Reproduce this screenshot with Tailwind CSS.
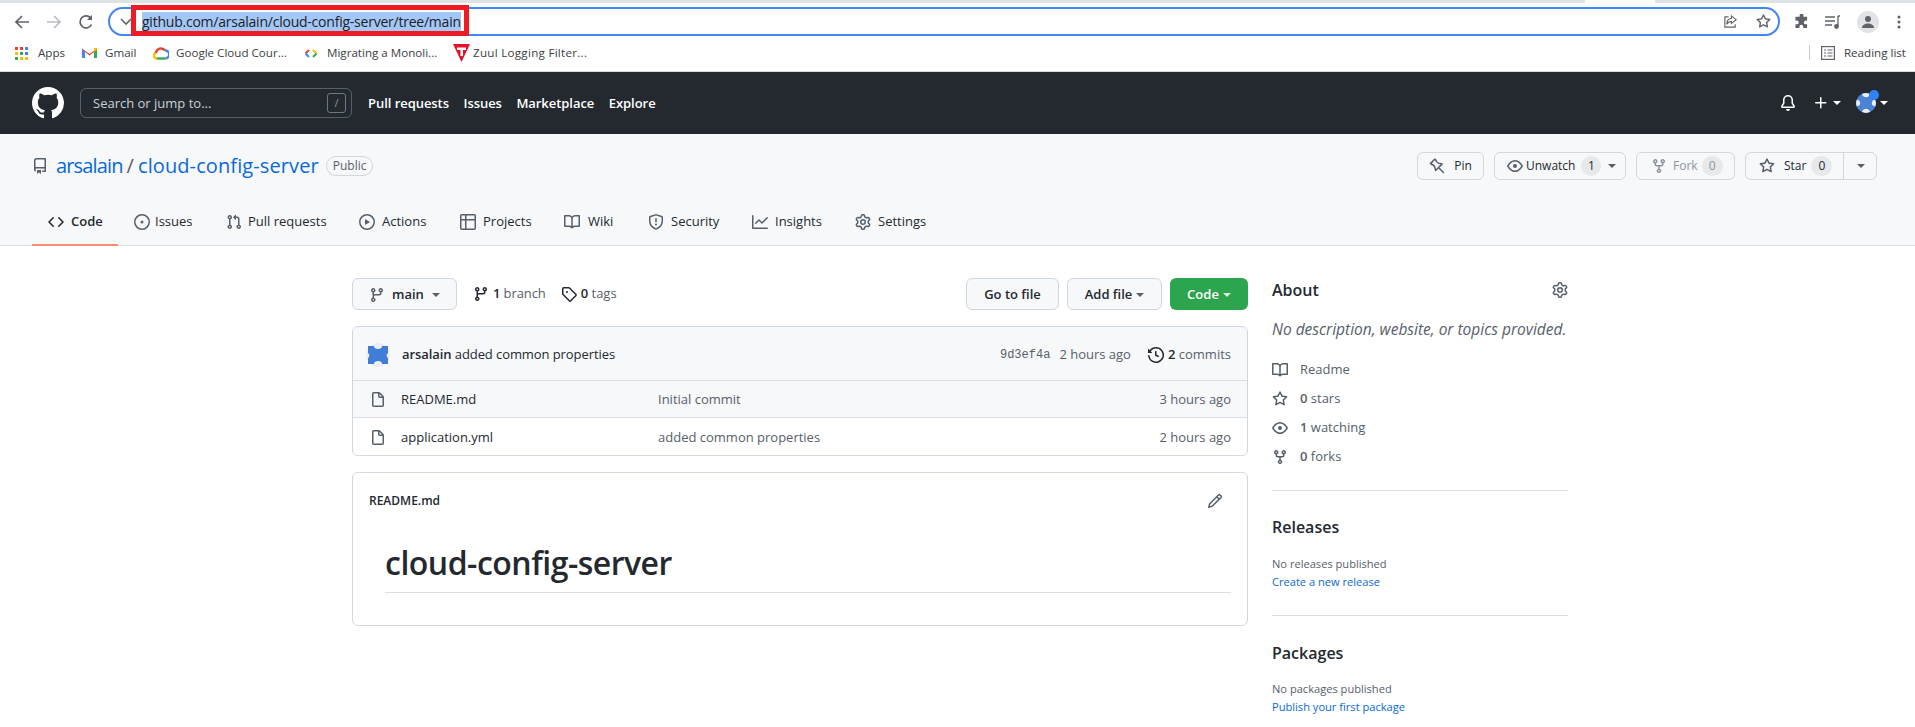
<!DOCTYPE html>
<html lang="en">
<head>
  <meta charset="UTF-8" />
  <title>arsalain/cloud-config-server</title>
  <script src="https://cdn.jsdelivr.net/npm/@tailwindcss/browser@4"></script>
</head>
<body class="h-[727px] overflow-hidden bg-white text-[#24292f] font-['Open_Sans',sans-serif] text-[13px]">
  <svg class="hidden">
    <symbol id="i-mark" viewBox="0 0 16 16"><path fill-rule="evenodd" d="M8 0C3.58 0 0 3.58 0 8c0 3.54 2.29 6.53 5.47 7.59.4.07.55-.17.55-.38 0-.19-.01-.82-.01-1.49-2.01.37-2.53-.49-2.69-.94-.09-.23-.48-.94-.82-1.13-.28-.15-.68-.52-.01-.53.63-.01 1.08.58 1.23.82.72 1.21 1.87.87 2.33.66.07-.52.28-.87.51-1.07-1.78-.2-3.64-.89-3.64-3.95 0-.87.31-1.59.82-2.15-.08-.2-.36-1.02.08-2.12 0 0 .67-.21 2.2.82.64-.18 1.32-.27 2-.27.68 0 1.36.09 2 .27 1.53-1.04 2.2-.82 2.2-.82.44 1.1.16 1.92.08 2.12.51.56.82 1.27.82 2.15 0 3.07-1.87 3.75-3.65 3.95.29.25.54.73.54 1.48 0 1.07-.01 1.93-.01 2.2 0 .21.15.46.55.38A8.013 8.013 0 0016 8c0-4.42-3.58-8-8-8z"/></symbol>
    <symbol id="i-repo" viewBox="0 0 16 16"><path fill-rule="evenodd" d="M2 2.5A2.5 2.5 0 014.5 0h8.75a.75.75 0 01.75.75v12.5a.75.75 0 01-.75.75h-2.5a.75.75 0 110-1.5h1.75v-2h-8a1 1 0 00-.714 1.7.75.75 0 01-1.072 1.05A2.495 2.495 0 012 11.5v-9zm10.5-1V9h-8c-.356 0-.694.074-1 .208V2.5a1 1 0 011-1h8zM5 12.25v3.25a.25.25 0 00.4.2l1.45-1.087a.25.25 0 01.3 0L8.6 15.7a.25.25 0 00.4-.2v-3.25a.25.25 0 00-.25-.25h-3.5a.25.25 0 00-.25.25z"/></symbol>
    <symbol id="i-code" viewBox="0 0 16 16"><path fill-rule="evenodd" d="M4.72 3.22a.75.75 0 011.06 1.06L2.06 8l3.72 3.72a.75.75 0 11-1.06 1.06L.47 8.53a.75.75 0 010-1.06l4.25-4.25zm6.56 0a.75.75 0 10-1.06 1.06L13.94 8l-3.72 3.72a.75.75 0 101.06 1.06l4.25-4.25a.75.75 0 000-1.06l-4.25-4.25z"/></symbol>
    <symbol id="i-issue" viewBox="0 0 16 16"><path d="M8 9.5a1.5 1.5 0 100-3 1.5 1.5 0 000 3z"/><path fill-rule="evenodd" d="M8 0a8 8 0 100 16A8 8 0 008 0zM1.5 8a6.5 6.5 0 1113 0 6.5 6.5 0 01-13 0z"/></symbol>
    <symbol id="i-pr" viewBox="0 0 16 16"><path fill-rule="evenodd" d="M7.177 3.073L9.573.677A.25.25 0 0110 .854v4.792a.25.25 0 01-.427.177L7.177 3.427a.25.25 0 010-.354zM3.75 2.5a.75.75 0 100 1.5.75.75 0 000-1.5zm-2.25.75a2.25 2.25 0 113 2.122v5.256a2.251 2.251 0 11-1.5 0V5.372A2.25 2.25 0 011.5 3.25zM11 2.5h-1V4h1a1 1 0 011 1v5.628a2.251 2.251 0 101.5 0V5A2.5 2.5 0 0011 2.5zm1 10.25a.75.75 0 111.5 0 .75.75 0 01-1.5 0zM3.75 12a.75.75 0 100 1.5.75.75 0 000-1.5z"/></symbol>
    <symbol id="i-play" viewBox="0 0 16 16"><path fill-rule="evenodd" d="M1.5 8a6.5 6.5 0 1113 0 6.5 6.5 0 01-13 0zM8 0a8 8 0 100 16A8 8 0 008 0zM6.379 5.227A.25.25 0 006 5.442v5.117a.25.25 0 00.379.214l4.264-2.559a.25.25 0 000-.428L6.379 5.227z"/></symbol>
    <symbol id="i-table" viewBox="0 0 16 16"><path fill-rule="evenodd" d="M0 1.75C0 .784.784 0 1.75 0h12.5C15.216 0 16 .784 16 1.75v12.5A1.75 1.75 0 0114.25 16H1.75A1.75 1.75 0 010 14.25V1.75zM1.5 6.5v7.75c0 .138.112.25.25.25H5v-8H1.5zM5 5H1.5V1.75a.25.25 0 01.25-.25H5V5zm1.5 1.5v8h7.75a.25.25 0 00.25-.25V6.5h-8zm8-1.5h-8V1.5h7.75a.25.25 0 01.25.25V5z"/></symbol>
    <symbol id="i-book" viewBox="0 0 16 16"><path fill-rule="evenodd" d="M0 1.75A.75.75 0 01.75 1h4.253c1.227 0 2.317.59 3 1.501A3.744 3.744 0 0111.006 1h4.245a.75.75 0 01.75.75v10.5a.75.75 0 01-.75.75h-4.507a2.25 2.25 0 00-1.591.659l-.622.621a.75.75 0 01-1.06 0l-.622-.621A2.25 2.25 0 005.258 13H.75a.75.75 0 01-.75-.75V1.75zm8.755 3a2.25 2.25 0 012.25-2.25H14.5v9h-3.757c-.71 0-1.4.201-1.992.572l.004-7.322zm-1.504 7.324l.004-5.073-.002-2.253A2.25 2.25 0 005.003 2.5H1.5v9h3.757a3.75 3.75 0 011.994.574z"/></symbol>
    <symbol id="i-shield" viewBox="0 0 16 16"><path fill-rule="evenodd" d="M7.467.133a1.75 1.75 0 011.066 0l5.25 1.68A1.75 1.75 0 0115 3.48V7c0 1.566-.32 3.182-1.303 4.682-.983 1.498-2.585 2.813-5.032 3.855a1.7 1.7 0 01-1.33 0c-2.447-1.042-4.049-2.357-5.032-3.855C1.32 10.182 1 8.566 1 7V3.48a1.75 1.75 0 011.217-1.667l5.25-1.68zm.61 1.429a.25.25 0 00-.153 0l-5.25 1.68a.25.25 0 00-.174.238V7c0 1.358.275 2.666 1.057 3.86.784 1.194 2.121 2.34 4.366 3.297a.2.2 0 00.154 0c2.245-.956 3.582-2.104 4.366-3.298C13.225 9.666 13.5 8.36 13.5 7V3.48a.25.25 0 00-.174-.237l-5.25-1.68zM9 10.5a1 1 0 11-2 0 1 1 0 012 0zm-.25-5.75a.75.75 0 10-1.5 0v3a.75.75 0 001.5 0v-3z"/></symbol>
    <symbol id="i-graph" viewBox="0 0 16 16"><path fill-rule="evenodd" d="M1.5 1.75a.75.75 0 00-1.5 0v12.5c0 .414.336.75.75.75h14.5a.75.75 0 000-1.5H1.5V1.75zm14.28 2.53a.75.75 0 00-1.06-1.06L10 7.94 7.53 5.47a.75.75 0 00-1.06 0L3.22 8.72a.75.75 0 001.06 1.06L7 7.06l2.47 2.47a.75.75 0 001.06 0l5.25-5.25z"/></symbol>
    <symbol id="i-gear" viewBox="0 0 16 16"><path fill-rule="evenodd" d="M7.429 1.525a6.593 6.593 0 011.142 0c.036.003.108.036.137.146l.289 1.105c.147.56.55.967.997 1.189.174.086.341.183.501.29.417.278.97.423 1.53.27l1.102-.303c.11-.03.175.016.195.046.219.31.41.641.573.989.014.031.022.11-.059.19l-.815.806c-.411.406-.562.957-.53 1.456a4.588 4.588 0 010 .582c-.032.499.119 1.05.53 1.456l.815.806c.08.08.073.159.059.19a6.494 6.494 0 01-.573.99c-.02.029-.086.074-.195.045l-1.103-.303c-.559-.153-1.112-.008-1.529.27-.16.107-.327.204-.5.29-.449.222-.851.628-.998 1.189l-.289 1.105c-.029.11-.101.143-.137.146a6.613 6.613 0 01-1.142 0c-.036-.003-.108-.037-.137-.146l-.289-1.105c-.147-.56-.55-.967-.997-1.189a4.502 4.502 0 01-.501-.29c-.417-.278-.97-.423-1.53-.27l-1.102.303c-.11.03-.175-.016-.195-.046a6.492 6.492 0 01-.573-.989c-.014-.031-.022-.11.059-.19l.815-.806c.411-.406.562-.957.53-1.456a4.587 4.587 0 010-.582c.032-.499-.119-1.05-.53-1.456l-.815-.806c-.08-.08-.073-.159-.059-.19a6.44 6.44 0 01.573-.99c.02-.029.086-.075.195-.045l1.103.303c.559.153 1.112.008 1.529-.27.16-.107.327-.204.5-.29.449-.222.851-.628.998-1.189l.289-1.105c.029-.11.101-.143.137-.146zM8 0c-.236 0-.47.01-.701.03-.743.065-1.29.615-1.458 1.261l-.29 1.106c-.017.066-.078.158-.211.224a5.994 5.994 0 00-.668.386c-.123.082-.233.09-.3.071L3.27 2.776c-.644-.177-1.392.02-1.82.63a7.977 7.977 0 00-.704 1.217c-.315.675-.111 1.422.363 1.891l.815.806c.05.048.098.147.088.294a6.084 6.084 0 000 .772c.01.147-.038.246-.088.294l-.815.806c-.474.469-.678 1.216-.363 1.891.2.428.436.835.704 1.218.428.609 1.176.806 1.82.63l1.103-.303c.066-.019.176-.011.299.071.213.143.436.272.668.386.133.066.194.158.212.224l.289 1.106c.169.646.715 1.196 1.458 1.26a8.094 8.094 0 001.402 0c.743-.064 1.29-.614 1.458-1.26l.29-1.106c.017-.066.078-.158.211-.224a5.98 5.98 0 00.668-.386c.123-.082.233-.09.3-.071l1.102.302c.644.177 1.392-.02 1.82-.63.268-.382.505-.789.704-1.217.315-.675.111-1.422-.364-1.891l-.814-.806c-.05-.048-.098-.147-.088-.294a6.1 6.1 0 000-.772c-.01-.147.039-.246.088-.294l.814-.806c.475-.469.679-1.216.364-1.891a7.992 7.992 0 00-.704-1.218c-.428-.609-1.176-.806-1.82-.63l-1.103.303c-.066.019-.176.011-.299-.071a5.991 5.991 0 00-.668-.386c-.133-.066-.194-.158-.212-.224L10.16 1.29C9.99.645 9.444.095 8.701.031A8.094 8.094 0 008 0zm1.5 8a1.5 1.5 0 11-3 0 1.5 1.5 0 013 0zM11 8a3 3 0 11-6 0 3 3 0 016 0z"/></symbol>
    <symbol id="i-pin" viewBox="0 0 16 16"><path fill="none" stroke="currentColor" stroke-width="1.5" stroke-linejoin="round" stroke-linecap="round" d="M5.6 1.4L1.4 5.6l2.6 1.4c1 .5 1.5 1.2 1.8 2.2l.8 3.3 3.2-3.2 3.3-3.2-3.3-.8c-1-.3-1.7-.8-2.2-1.8L6.2 1.2zM10 10l4.4 4.5"/></symbol>
    <symbol id="i-eye" viewBox="0 0 16 16"><path fill-rule="evenodd" d="M1.679 7.932c.412-.621 1.242-1.75 2.366-2.717C5.175 4.242 6.527 3.5 8 3.5c1.473 0 2.824.742 3.955 1.715 1.124.967 1.954 2.096 2.366 2.717a.119.119 0 010 .136c-.412.621-1.242 1.75-2.366 2.717C10.825 11.758 9.473 12.5 8 12.5c-1.473 0-2.824-.742-3.955-1.715C2.92 9.818 2.09 8.69 1.679 8.068a.119.119 0 010-.136zM8 2c-1.981 0-3.67.992-4.933 2.078C1.797 5.169.88 6.423.43 7.1a1.619 1.619 0 000 1.798c.45.678 1.367 1.932 2.637 3.024C4.329 13.008 6.019 14 8 14c1.981 0 3.67-.992 4.933-2.078 1.27-1.091 2.187-2.345 2.637-3.023a1.619 1.619 0 000-1.798c-.45-.678-1.367-1.932-2.637-3.023C11.671 2.992 9.981 2 8 2zm0 8a2 2 0 100-4 2 2 0 000 4z"/></symbol>
    <symbol id="i-fork" viewBox="0 0 16 16"><path fill-rule="evenodd" d="M5 3.25a.75.75 0 11-1.5 0 .75.75 0 011.5 0zm0 2.122a2.25 2.25 0 10-1.5 0v.878A2.25 2.25 0 005.75 8.5h1.5v2.128a2.251 2.251 0 101.5 0V8.5h1.5a2.25 2.25 0 002.25-2.25v-.878a2.25 2.25 0 10-1.5 0v.878a.75.75 0 01-.75.75h-4.5A.75.75 0 015 6.25v-.878zm3.75 7.378a.75.75 0 11-1.5 0 .75.75 0 011.5 0zm3-8.75a.75.75 0 100-1.5.75.75 0 000 1.5z"/></symbol>
    <symbol id="i-star" viewBox="0 0 16 16"><path fill-rule="evenodd" d="M8 .25a.75.75 0 01.673.418l1.882 3.815 4.21.612a.75.75 0 01.416 1.279l-3.046 2.97.719 4.192a.75.75 0 01-1.088.791L8 12.347l-3.766 1.98a.75.75 0 01-1.088-.79l.72-4.194L.818 6.374a.75.75 0 01.416-1.28l4.21-.611L7.327.668A.75.75 0 018 .25zm0 2.445L6.615 5.5a.75.75 0 01-.564.41l-3.097.45 2.24 2.184a.75.75 0 01.216.664l-.528 3.084 2.769-1.456a.75.75 0 01.698 0l2.77 1.456-.53-3.084a.75.75 0 01.216-.664l2.24-2.183-3.096-.45a.75.75 0 01-.564-.41L8 2.694v.001z"/></symbol>
    <symbol id="i-branch" viewBox="0 0 16 16"><path fill-rule="evenodd" d="M11.75 2.5a.75.75 0 100 1.5.75.75 0 000-1.5zm-2.25.75a2.25 2.25 0 113 2.122V6A2.5 2.5 0 0110 8.5H6a1 1 0 00-1 1v1.128a2.251 2.251 0 11-1.5 0V5.372a2.25 2.25 0 111.5 0v1.836A2.492 2.492 0 016 7h4a1 1 0 001-1v-.628A2.25 2.25 0 019.5 3.25zM4.25 12a.75.75 0 100 1.5.75.75 0 000-1.5zM3.5 3.25a.75.75 0 111.5 0 .75.75 0 01-1.5 0z"/></symbol>
    <symbol id="i-tag" viewBox="0 0 16 16"><path fill-rule="evenodd" d="M2.5 7.775V2.75a.25.25 0 01.25-.25h5.025a.25.25 0 01.177.073l6.25 6.25a.25.25 0 010 .354l-5.025 5.025a.25.25 0 01-.354 0l-6.25-6.25a.25.25 0 01-.073-.177zm-1.5 0V2.75C1 1.784 1.784 1 2.75 1h5.025c.464 0 .91.184 1.238.513l6.25 6.25a1.75 1.75 0 010 2.474l-5.026 5.026a1.75 1.75 0 01-2.474 0l-6.25-6.25A1.75 1.75 0 011 7.775zM6 5a1 1 0 100 2 1 1 0 000-2z"/></symbol>
    <symbol id="i-history" viewBox="0 0 16 16"><path fill-rule="evenodd" d="M1.643 3.143L.427 1.927A.25.25 0 000 2.104V5.75c0 .138.112.25.25.25h3.646a.25.25 0 00.177-.427L2.715 4.215a6.5 6.5 0 11-1.18 4.458.75.75 0 10-1.493.154 8.001 8.001 0 101.6-5.684zM7.75 4a.75.75 0 01.75.75v2.992l2.028.812a.75.75 0 01-.557 1.392l-2.5-1A.75.75 0 017 8.25v-3.5A.75.75 0 017.75 4z"/></symbol>
    <symbol id="i-file" viewBox="0 0 16 16"><path fill-rule="evenodd" d="M3.75 1.5a.25.25 0 00-.25.25v11.5c0 .138.112.25.25.25h8.5a.25.25 0 00.25-.25V6H9.75A1.75 1.75 0 018 4.25V1.5H3.75zm5.75.56v2.19c0 .138.112.25.25.25h2.19L9.5 2.06zM2 1.75C2 .784 2.784 0 3.75 0h5.086c.464 0 .909.184 1.237.513l3.414 3.414c.329.328.513.773.513 1.237v8.086A1.75 1.75 0 0112.25 15h-8.5A1.75 1.75 0 012 13.25V1.75z"/></symbol>
    <symbol id="i-pencil" viewBox="0 0 16 16"><path fill-rule="evenodd" d="M11.013 1.427a1.75 1.75 0 012.474 0l1.086 1.086a1.75 1.75 0 010 2.474l-8.61 8.61c-.21.21-.47.364-.756.445l-3.251.93a.75.75 0 01-.927-.928l.929-3.25a1.75 1.75 0 01.445-.758l8.61-8.61zm1.414 1.06a.25.25 0 00-.354 0L10.811 3.75l1.439 1.44 1.263-1.263a.25.25 0 000-.354l-1.086-1.086zM11.189 6.25L9.75 4.81l-6.286 6.287a.25.25 0 00-.064.108l-.558 1.953 1.953-.558a.249.249 0 00.108-.064l6.286-6.286z"/></symbol>
  </svg>

  <!-- browser chrome -->
  <div class="h-[3px] bg-[#dee1e6] flex">
    <div class="ml-[1585px] w-[70px] bg-white"></div>
  </div>
  <div class="relative h-[37px] flex items-center">
    <div class="w-[108px] flex items-center pl-[14px] gap-[16px] text-[#5f6368]">
      <svg class="w-4 h-4" viewBox="0 0 16 16" fill="none" stroke="currentColor" stroke-width="1.7"><path d="M15 8H2M8 2L2 8l6 6"/></svg>
      <svg class="w-4 h-4 text-[#b9bcc0]" viewBox="0 0 16 16" fill="none" stroke="currentColor" stroke-width="1.7"><path d="M1 8h13M8 2l6 6-6 6"/></svg>
      <svg class="w-4 h-4" viewBox="0 0 16 16" fill="none" stroke="currentColor" stroke-width="1.7"><path d="M13.5 10.5A6 6 0 1 1 13 4.5"/><path d="M14 1v5H9z" fill="currentColor" stroke="none"/></svg>
    </div>
    <div class="w-[1672px] h-[29px] border-2 border-[#4285f4] rounded-full flex items-center pl-[32px] pr-[7px] relative">
      <svg class="absolute left-[10px] top-[9px] w-[12px] h-[8px] text-[#5f6368]" viewBox="0 0 12 8" fill="none" stroke="currentColor" stroke-width="1.6"><path d="M1 1l5 5 5-5"/></svg>
      <span class="bg-[#a3c8f7] h-[20px] leading-[20px] text-[14px] text-[#202124] whitespace-nowrap tracking-[-0.23px]">github.com/arsalain/cloud-config-server/tree/main</span>
      <div class="ml-auto flex items-center gap-[18px] text-[#5f6368]">
        <svg class="w-[15px] h-[15px]" viewBox="0 0 16 16" fill="none" stroke="currentColor" stroke-width="1.2"><path d="M6 3H2v11h11v-3"/><path d="M9 2l5 4-5 4V8C7 8 5 9 4 11c0-4 2-6 5-6.5z"/></svg>
        <svg class="w-[15px] h-[15px] fill-[#5f6368]"><use href="#i-star"/></svg>
      </div>
    </div>
    <div class="flex items-center ml-[14px] gap-[16px] text-[#5f6368]">
      <svg class="w-[15px] h-[15px]" viewBox="0 0 16 16" fill="currentColor"><path d="M6 1.5a2 2 0 0 1 4 0V3h4v4h-1.5a2 2 0 0 0 0 4H14v4H9.8v-1.5a2 2 0 0 0-4 0V15H1.5v-4H3a2 2 0 0 0 0-4H1.5V3H6z"/></svg>
      <svg class="w-[16px] h-[14px]" viewBox="0 0 16 14" fill="none" stroke="currentColor" stroke-width="1.3"><path d="M0 2h10M0 6h10M0 10h7M13 1v9.5M13 1h2"/><circle cx="11.5" cy="11.5" r="1.8" fill="currentColor"/></svg>
      <div class="w-[22px] h-[22px] rounded-full bg-[#e1e3e6] flex items-center justify-center">
        <svg class="w-[14px] h-[14px] text-[#5f6368]" viewBox="0 0 14 14" fill="currentColor"><circle cx="7" cy="4" r="3"/><path d="M1 13c0-3 3-4.5 6-4.5s6 1.5 6 4.5z"/></svg>
      </div>
      <svg class="w-[4px] h-[14px] ml-[2px] text-[#5f6368]" viewBox="0 0 4 14" fill="currentColor"><circle cx="2" cy="2" r="1.5"/><circle cx="2" cy="7" r="1.5"/><circle cx="2" cy="12" r="1.5"/></svg>
    </div>
    <!-- red annotation box over the address bar -->
    <div class="absolute left-[131px] top-[2px] w-[338px] h-[31px] border-[5px] border-[#ed1c24]"></div>
  </div>
  <div class="h-[32px] border-b border-[#d5d7da] flex items-center text-[11.6px] text-[#3c4043] pb-[5px]">
    <div class="flex items-center pl-[15px]">
      <svg class="w-[13px] h-[13px]" viewBox="0 0 13 13"><rect x="0" y="0" width="3" height="3" fill="#ea4335"/><rect x="5" y="0" width="3" height="3" fill="#ea4335"/><rect x="10" y="0" width="3" height="3" fill="#4285f4"/><rect x="0" y="5" width="3" height="3" fill="#fbbc04"/><rect x="5" y="5" width="3" height="3" fill="#34a853"/><rect x="10" y="5" width="3" height="3" fill="#4285f4"/><rect x="0" y="10" width="3" height="3" fill="#34a853"/><rect x="5" y="10" width="3" height="3" fill="#fbbc04"/><rect x="10" y="10" width="3" height="3" fill="#fbbc04"/></svg>
      <span class="ml-[10px] w-[44px]">Apps</span>
      <svg class="w-[15px] h-[12px]" viewBox="0 0 15 12"><path d="M0 1.5L7.5 7 15 1.5V11h-3V5L7.5 8.5 3 5v6H0z" fill="#ea4335"/><path d="M0 2v9h3V5z" fill="#4285f4"/><path d="M12 5v6h3V2z" fill="#34a853"/><path d="M12 1l3 0v1.5L12 5z" fill="#fbbc04"/></svg>
      <span class="ml-[8px] w-[48px]">Gmail</span>
      <svg class="w-[16px] h-[13px]" viewBox="0 0 16 13" fill="none" stroke-width="2.4"><path d="M4 11.5H3.5a2.8 2.8 0 0 1-.5-5.5" stroke="#fbbc04"/><path d="M3 6a5 5 0 0 1 9-2.5" stroke="#ea4335"/><path d="M12 3.5a3.9 3.9 0 0 1 .5 8" stroke="#4285f4"/><path d="M4 11.5h8.5" stroke="#34a853"/></svg>
      <span class="ml-[7px] w-[128px] whitespace-nowrap">Google Cloud Cour...</span>
      <svg class="w-[14px] h-[9px]" viewBox="0 0 14 9" fill="none" stroke-width="2"><path d="M5 1L1.5 4.5" stroke="#ea4335"/><path d="M1.5 4.5L5 8" stroke="#4285f4"/><path d="M9 1l3.5 3.5" stroke="#fbbc04"/><path d="M12.5 4.5L9 8" stroke="#34a853"/></svg>
      <span class="ml-[9px] w-[126px] whitespace-nowrap">Migrating a Monoli...</span>
      <svg class="w-[17px] h-[18px]" viewBox="0 0 17 18"><path d="M0 0h17L8.5 18z" fill="#e8112d"/><path d="M4 3.5h9V6h-3v6H7.5V6H4z" fill="#fff"/></svg>
      <span class="ml-[3px] whitespace-nowrap tracking-[0.28px]">Zuul Logging Filter...</span>
    </div>
    <div class="ml-auto flex items-center">
      <div class="w-px h-[15px] bg-[#c8cacc]"></div>
      <svg class="ml-[11px] w-[14px] h-[14px] text-[#5f6368]" viewBox="0 0 14 14" fill="none" stroke="currentColor" stroke-width="1.2"><rect x="0.6" y="0.6" width="12.8" height="12.8"/><path d="M3 4h2M3 7h2M3 10h2M6.5 4h5M6.5 7h5M6.5 10h5"/></svg>
      <span class="ml-[9px] mr-[9px] whitespace-nowrap">Reading list</span>
    </div>
  </div>

  <!-- github header -->
  <header class="h-[62px] bg-[#24292f] flex items-center pl-[32px] pr-[27px] text-white">
    <svg class="w-[32px] h-[32px] fill-white"><use href="#i-mark"/></svg>
    <div class="ml-[16px] w-[272px] h-[30px] border border-[#57606a] rounded-[6px] flex items-center pl-[12px] pr-[5px] text-[#c9d1d9]">
      <span class="pt-px">Search or jump to...</span>
      <span class="ml-auto w-[19px] h-[20px] border border-[#6e7681] rounded-[3px] flex items-center justify-center text-[11px] text-[#8b949e]">/</span>
    </div>
    <nav class="ml-[16px] flex gap-[14.5px] font-semibold whitespace-nowrap pt-[2px] tracking-[-0.05px]">
      <span>Pull requests</span><span>Issues</span><span>Marketplace</span><span>Explore</span>
    </nav>
    <div class="ml-auto flex items-center">
      <svg class="w-4 h-4 fill-white" viewBox="0 0 16 16"><path d="M8 16a2 2 0 001.985-1.75c.017-.137-.097-.25-.235-.25h-3.5c-.138 0-.252.113-.235.25A2 2 0 008 16z"/><path fill-rule="evenodd" d="M8 1.5A3.5 3.5 0 004.5 5v2.947c0 .346-.102.683-.294.97l-1.703 2.556a.018.018 0 00-.003.01l.001.006c0 .002.002.004.004.006a.017.017 0 00.006.004l.007.001h10.964l.007-.001a.018.018 0 00.006-.004.016.016 0 00.004-.006l.001-.007a.017.017 0 00-.003-.01l-1.703-2.554a1.75 1.75 0 01-.294-.97V5A3.5 3.5 0 008 1.5zM3 5a5 5 0 0110 0v2.947c0 .05.015.098.042.139l1.703 2.555A1.518 1.518 0 0113.482 13H2.518a1.518 1.518 0 01-1.263-2.36l1.703-2.554A.25.25 0 003 7.947V5z"/></svg>
      <svg class="ml-[17px] w-4 h-4 fill-white" viewBox="0 0 16 16"><path fill-rule="evenodd" d="M7.75 2a.75.75 0 01.75.75V7h4.25a.75.75 0 110 1.5H8.5v4.25a.75.75 0 11-1.5 0V8.5H2.75a.75.75 0 010-1.5H7V2.75A.75.75 0 017.75 2z"/></svg>
      <span class="ml-[4px] w-0 h-0 border-x-[4px] border-x-transparent border-t-[4px] border-t-white"></span>
      <div class="relative ml-[15px] w-[20px] h-[20px]">
        <svg class="w-[20px] h-[20px] rounded-full bg-[#4a82d6]" viewBox="0 0 24 24"><path d="M7 0h10a5 5 0 0 1-10 0zM0 8a5 4 0 0 1 0 8zM24 8a5 4 0 0 0 0 8zM7 24a5 5 0 0 1 10 0z" fill="#e8eef8"/></svg>
        <span class="absolute -top-[3px] -right-[3px] w-[10px] h-[10px] rounded-full bg-[#2f81f7]"></span>
      </div>
      <span class="ml-[4px] w-0 h-0 border-x-[4px] border-x-transparent border-t-[4px] border-t-white"></span>
    </div>
  </header>

  <!-- repo head -->
  <div class="h-[112px] bg-[#f6f8fa] border-b border-[#d8dee4] flex flex-col">
    <div class="h-[46px] mt-[18px] pl-[32px] pr-[38px] flex">
      <div class="flex items-center h-[28px] whitespace-nowrap">
        <svg class="w-4 h-4 fill-[#57606a]"><use href="#i-repo"/></svg>
        <span class="ml-[8px] text-[20px] text-[#0969da] leading-none tracking-[-0.85px]">arsalain</span>
        <span class="mx-[4px] text-[20px] text-[#57606a] leading-none">/</span>
        <span class="text-[20px] text-[#0969da] leading-none tracking-[0.1px]">cloud-config-server</span>
        <span class="ml-[7px] h-[20px] px-[6px] border border-[#d0d7de] rounded-full text-[12px] text-[#57606a] flex items-center">Public</span>
      </div>
      <div class="ml-auto flex gap-[10px] h-[28px] text-[12px]">
        <div class="w-[67px] border border-[#d0d7de] rounded-[6px] flex items-center justify-center gap-[9px]"><svg class="w-4 h-4 text-[#57606a]"><use href="#i-pin"/></svg>Pin</div>
        <div class="w-[132px] border border-[#d0d7de] rounded-[6px] flex items-center pl-[12px]">
          <svg class="w-4 h-4 fill-[#57606a]"><use href="#i-eye"/></svg><span class="ml-[3px]">Unwatch</span>
          <span class="ml-[6px] w-[20px] h-[20px] rounded-full bg-[#e6e8ea] flex items-center justify-center">1</span>
          <span class="ml-[7px] w-0 h-0 border-x-[4px] border-x-transparent border-t-[4px] border-t-[#57606a]"></span>
        </div>
        <div class="w-[99px] border border-[#d0d7de] rounded-[6px] flex items-center pl-[14px] text-[#8c959f]">
          <svg class="w-4 h-4 fill-[#8c959f]"><use href="#i-fork"/></svg><span class="ml-[6px]">Fork</span>
          <span class="ml-[4px] w-[21px] h-[20px] rounded-full bg-[#e6e8ea] flex items-center justify-center">0</span>
        </div>
        <div class="w-[132px] border border-[#d0d7de] rounded-[6px] flex items-center">
          <div class="w-[98px] h-full border-r border-[#d0d7de] flex items-center pl-[13px]">
            <svg class="w-4 h-4 fill-[#57606a]"><use href="#i-star"/></svg><span class="ml-[9px]">Star</span>
            <span class="ml-[5px] w-[21px] h-[20px] rounded-full bg-[#e6e8ea] flex items-center justify-center">0</span>
          </div>
          <span class="ml-[13px] w-0 h-0 border-x-[4px] border-x-transparent border-t-[4px] border-t-[#57606a]"></span>
        </div>
      </div>
    </div>
    <nav class="flex-1 flex items-stretch pl-[32px] whitespace-nowrap">
      <div class="w-[86px] border-b-2 border-[#fd8c73] flex items-center pl-[16px] pt-px gap-[7px] font-semibold -mb-px"><svg class="w-4 h-4 fill-[#24292f]"><use href="#i-code"/></svg>Code</div>
      <div class="w-[108px] flex items-center pl-[16px] gap-[5px]"><svg class="w-4 h-4 fill-[#57606a]"><use href="#i-issue"/></svg>Issues</div>
      <div class="w-[133px] flex items-center gap-[6px]"><svg class="w-4 h-4 fill-[#57606a]"><use href="#i-pr"/></svg>Pull requests</div>
      <div class="w-[101px] flex items-center gap-[7px]"><svg class="w-4 h-4 fill-[#57606a]"><use href="#i-play"/></svg>Actions</div>
      <div class="w-[104px] flex items-center gap-[7px]"><svg class="w-4 h-4 fill-[#57606a]"><use href="#i-table"/></svg>Projects</div>
      <div class="w-[84px] flex items-center gap-[8px]"><svg class="w-4 h-4 fill-[#57606a]"><use href="#i-book"/></svg>Wiki</div>
      <div class="w-[104px] flex items-center gap-[7px]"><svg class="w-4 h-4 fill-[#57606a]"><use href="#i-shield"/></svg>Security</div>
      <div class="w-[103px] flex items-center gap-[7px]"><svg class="w-4 h-4 fill-[#57606a]"><use href="#i-graph"/></svg>Insights</div>
      <div class="flex items-center gap-[7px]"><svg class="w-4 h-4 fill-[#57606a]"><use href="#i-gear"/></svg>Settings</div>
    </nav>
  </div>

  <!-- main -->
  <main class="flex pl-[352px] pt-[32px]">
    <div class="w-[896px]">
      <div class="flex items-center h-[32px]">
        <div class="w-[105px] h-full bg-[#f6f8fa] border border-[#d0d7de] rounded-[6px] flex items-center pl-[16px] pt-px font-semibold">
          <svg class="w-4 h-4 fill-[#57606a]"><use href="#i-branch"/></svg><span class="ml-[7px]">main</span>
          <span class="ml-[8px] w-0 h-0 border-x-[4px] border-x-transparent border-t-[4px] border-t-[#57606a]"></span>
        </div>
        <svg class="ml-[16px] w-4 h-4 fill-[#24292f]"><use href="#i-branch"/></svg>
        <span class="ml-[4px] text-[#57606a] tracking-[-0.1px]"><b class="font-semibold text-[#24292f]">1</b> branch</span>
        <svg class="ml-[15px] w-4 h-4 fill-[#24292f]"><use href="#i-tag"/></svg>
        <span class="ml-[4px] text-[#57606a]"><b class="font-semibold text-[#24292f]">0</b> tags</span>
        <div class="ml-auto flex gap-[8px] h-full font-semibold">
          <div class="w-[93px] bg-[#f6f8fa] border border-[#d0d7de] rounded-[6px] pt-px flex items-center justify-center">Go to file</div>
          <div class="w-[95px] bg-[#f6f8fa] border border-[#d0d7de] rounded-[6px] pt-px flex items-center justify-center gap-[4px]">Add file<span class="w-0 h-0 border-x-[4px] border-x-transparent border-t-[4px] border-t-[#57606a]"></span></div>
          <div class="w-[78px] bg-[#2da44e] rounded-[6px] pt-px text-white flex items-center justify-center gap-[4px]">Code<span class="w-0 h-0 border-x-[4px] border-x-transparent border-t-[4px] border-t-white/80"></span></div>
        </div>
      </div>
      <div class="mt-[16px] h-[130px] border border-[#d0d7de] rounded-[6px] overflow-hidden">
        <div class="h-[54px] bg-[#f6f8fa] border-b border-[#d8dee4] flex items-center pl-[13px] pr-[16px] pt-[2px]">
          <svg class="w-[24px] h-[24px]" viewBox="0 0 24 24"><circle cx="12" cy="12" r="12" fill="#ecedee"/><path d="M2 3h6a4 3 0 0 0 8 0h6v7a3 3 0 0 0 0 5v6h-6a4 3 0 0 0-8 0H2v-6a3 3 0 0 0 0-5z" fill="#3f7dd6"/></svg>
          <span class="ml-[12px] tracking-[-0.08px]"><b class="font-semibold">arsalain</b> added common properties</span>
          <span class="ml-auto font-['Liberation_Mono',monospace] text-[12px] text-[#57606a]">9d3ef4a</span>
          <span class="ml-[9px] text-[#57606a]">2 hours ago</span>
          <svg class="ml-[17px] w-4 h-4 fill-[#24292f]"><use href="#i-history"/></svg>
          <span class="ml-[4px] text-[#57606a]"><b class="font-semibold text-[#24292f]">2</b> commits</span>
        </div>
        <div class="h-[37px] bg-[#f6f8fa] border-b border-[#d8dee4] flex items-center pl-[17px] pr-[16px] pt-[2px]">
          <svg class="w-4 h-4 fill-[#57606a]"><use href="#i-file"/></svg>
          <span class="ml-[15px] w-[257px]">README.md</span>
          <span class="text-[#57606a]">Initial commit</span>
          <span class="ml-auto text-[#57606a]">3 hours ago</span>
        </div>
        <div class="h-[37px] flex items-center pl-[17px] pr-[16px] pt-[2px]">
          <svg class="w-4 h-4 fill-[#57606a]"><use href="#i-file"/></svg>
          <span class="ml-[15px] w-[257px]">application.yml</span>
          <span class="text-[#57606a]">added common properties</span>
          <span class="ml-auto text-[#57606a]">2 hours ago</span>
        </div>
      </div>
      <div class="mt-[16px] h-[154px] border border-[#d0d7de] rounded-[6px] pl-[16px] pr-[24px]">
        <div class="h-[55px] flex items-center font-semibold text-[12px]">README.md
          <svg class="ml-auto w-4 h-4 fill-[#57606a]"><use href="#i-pencil"/></svg>
        </div>
        <div class="ml-[16px] -mr-[8px] mt-[10px] pb-[4px] border-b border-[#d8dee4] text-[32px] leading-[50px] font-semibold tracking-[-0.5px]">cloud-config-server</div>
      </div>
    </div>

    <aside class="w-[296px] ml-[24px]">
      <div class="h-[213px] border-b border-[#d8dee4]">
        <div class="flex items-center h-[24px]">
          <h2 class="text-[16px] font-semibold">About</h2>
          <svg class="ml-auto w-4 h-4 fill-[#57606a]"><use href="#i-gear"/></svg>
        </div>
        <p class="mt-[16px] text-[15.5px] italic text-[#57606a] whitespace-nowrap">No description, website, or topics provided.</p>
        <ul class="mt-[14px] text-[#57606a]">
          <li class="h-[29px] flex items-center gap-[12px]"><svg class="w-4 h-4 fill-[#57606a]"><use href="#i-book"/></svg>Readme</li>
          <li class="h-[29px] flex items-center gap-[12px]"><svg class="w-4 h-4 fill-[#57606a]"><use href="#i-star"/></svg><span><b class="font-semibold">0</b> stars</span></li>
          <li class="h-[29px] flex items-center gap-[12px]"><svg class="w-4 h-4 fill-[#57606a]"><use href="#i-eye"/></svg><span><b class="font-semibold">1</b> watching</span></li>
          <li class="h-[29px] flex items-center gap-[12px]"><svg class="w-4 h-4 fill-[#57606a]"><use href="#i-fork"/></svg><span><b class="font-semibold">0</b> forks</span></li>
        </ul>
      </div>
      <div class="h-[125px] border-b border-[#d8dee4] pt-[24px]">
        <h2 class="text-[16px] font-semibold leading-[24px]">Releases</h2>
        <div class="mt-[16px] text-[11.1px] leading-[18px] text-[#57606a]">No releases published</div>
        <div class="text-[11.1px] leading-[18px] text-[#0969da]">Create a new release</div>
      </div>
      <div class="pt-[25px]">
        <h2 class="text-[16px] font-semibold leading-[24px]">Packages</h2>
        <div class="mt-[15px] text-[11.1px] leading-[18px] text-[#57606a]">No packages published</div>
        <div class="text-[11.1px] leading-[18px] text-[#0969da]">Publish your first package</div>
      </div>
    </aside>
  </main>
</body>
</html>
